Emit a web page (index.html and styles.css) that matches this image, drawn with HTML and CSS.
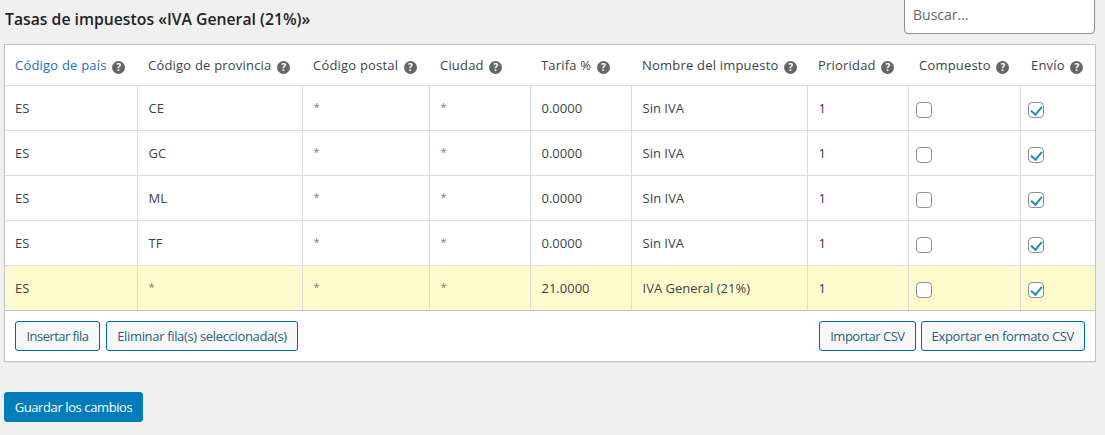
FILE: index.html
```html
<!DOCTYPE html>
<html lang="es">
<head>
<meta charset="utf-8">
<title>Tasas de impuestos</title>
<link rel="stylesheet" href="styles.css">
</head>
<body>
<div class="top">
  <h2 class="title">Tasas de impuestos «IVA General (21%)»</h2>
  <input class="search" type="text" placeholder="Buscar...">
</div>
<div class="panel">
<table class="rates">
  <colgroup>
    <col class="c1"><col class="c2"><col class="c3"><col class="c4"><col class="c5"><col class="c6"><col class="c7"><col class="c8"><col class="c9">
  </colgroup>
  <thead>
    <tr>
      <th class="link">Código de país <i class="help">?</i></th>
      <th>Código de provincia <i class="help">?</i></th>
      <th>Código postal <i class="help">?</i></th>
      <th>Ciudad <i class="help">?</i></th>
      <th>Tarifa % <i class="help">?</i></th>
      <th>Nombre del impuesto <i class="help">?</i></th>
      <th>Prioridad <i class="help">?</i></th>
      <th>Compuesto <i class="help">?</i></th>
      <th>Envío <i class="help">?</i></th>
    </tr>
  </thead>
  <tbody>
    <tr><td>ES</td><td>CE</td><td class="star">*</td><td class="star">*</td><td>0.0000</td><td>Sin IVA</td><td class="num">1</td><td class="chk"><input type="checkbox"></td><td class="chk"><input type="checkbox" checked></td></tr>
    <tr><td>ES</td><td>GC</td><td class="star">*</td><td class="star">*</td><td>0.0000</td><td>Sin IVA</td><td class="num">1</td><td class="chk"><input type="checkbox"></td><td class="chk"><input type="checkbox" checked></td></tr>
    <tr><td>ES</td><td>ML</td><td class="star">*</td><td class="star">*</td><td>0.0000</td><td>SIn IVA</td><td class="num">1</td><td class="chk"><input type="checkbox"></td><td class="chk"><input type="checkbox" checked></td></tr>
    <tr><td>ES</td><td>TF</td><td class="star">*</td><td class="star">*</td><td>0.0000</td><td>Sin IVA</td><td class="num">1</td><td class="chk"><input type="checkbox"></td><td class="chk"><input type="checkbox" checked></td></tr>
    <tr class="active"><td>ES</td><td class="star">*</td><td class="star">*</td><td class="star">*</td><td>21.0000</td><td>IVA General (21%)</td><td class="num">1</td><td class="chk"><input type="checkbox"></td><td class="chk"><input type="checkbox" checked></td></tr>
  </tbody>
</table>
<div class="actions">
  <div class="group left">
    <button class="btn insert" type="button">Insertar fila</button>
    <button class="btn remove" type="button">Eliminar fila(s) seleccionada(s)</button>
  </div>
  <div class="group">
    <button class="btn import" type="button">Importar CSV</button>
    <button class="btn" type="button">Exportar en formato CSV</button>
  </div>
</div>
</div>
<button class="save" type="button">Guardar los cambios</button>
</body>
</html>
```
FILE: styles.css
```css
* { box-sizing: border-box; }
html, body { margin: 0; height: 435px; overflow: hidden; }
body {
  background: #f0f0f1;
  color: #3c434a;
  font-family: "Open Sans", "Noto Sans", sans-serif;
  font-size: 13px;
  padding: 0 9px 0 4px;
}
.top {
  display: flex;
  justify-content: space-between;
  align-items: flex-end;
  height: 44px;
  padding-bottom: 10px;
}
.title {
  margin: 0 0 0 1px;
  font-size: 15.75px;
  font-weight: 600;
  line-height: 20px;
  color: #1d2327;
  position: relative;
  top: -5px;
}
.search {
  display: block;
  width: 191px;
  height: 40px;
  margin-right: 1px;
  margin-top: -7px;
  padding: 0 8px;
  border: 1px solid #8c8f94;
  border-radius: 4px;
  background: #fff;
  font: 14px "Open Sans", sans-serif;
}
.search::placeholder { color: #646970; opacity: 1; }
.panel {
  width: 1092px;
  background: #fff;
  border: 1px solid #c3c4c7;
  box-shadow: 0 1px 1px rgba(0,0,0,.04);
}
.rates {
  width: 1090px;
  table-layout: fixed;
  border-collapse: collapse;
}
.c1 { width: 132px; }
.c2 { width: 165px; }
.c3 { width: 127px; }
.c4 { width: 101px; }
.c5 { width: 101px; }
.c6 { width: 176px; }
.c7 { width: 101px; }
.c8 { width: 112px; }
.c9 { width: 75px; }
th {
  height: 40px;
  padding: 1px 0 0 11px;
  text-align: left;
  font-weight: 400;
  color: #3c434a;
  white-space: nowrap;
  letter-spacing: .2px;
  border-bottom: 1px solid #dcdcde;
  vertical-align: middle;
}
th:first-child, td:first-child { padding-left: 10px; }
th.link { color: #2271b1; }
td {
  height: 45px;
  padding: 0 0 0 11px;
  color: #3c434a;
  border-left: 1px solid #dcdcde;
  border-bottom: 1px solid #dcdcde;
  vertical-align: middle;
  background: #fff;
}
td:first-child { border-left: 0; }
td.star { color: #787c82; font-size: 11px; padding-bottom: 3px; }
td.num { color: #3f1f6b; }
td.chk { padding: 4px 0 0 7px; }
tbody tr:last-child td { border-bottom-color: #c3c4c7; }
.active td { background: #fffbcc; }
.help {
  display: inline-block;
  width: 13px;
  height: 13px;
  margin-left: 2px;
  border-radius: 50%;
  background: #666;
  color: #fff;
  font: 700 10px/13px "Open Sans", sans-serif;
  letter-spacing: 0;
  text-align: center;
  vertical-align: -1px;
}
input[type=checkbox] {
  appearance: none;
  display: block;
  position: relative;
  width: 16px;
  height: 16px;
  margin: 0;
  border: 1px solid #8c8f94;
  border-radius: 4px;
  background: #fff;
}
input[type=checkbox]:checked::after {
  content: "";
  position: absolute;
  left: 4.5px;
  top: 1px;
  width: 5px;
  height: 9px;
  border: solid #1e8cbe;
  border-width: 0 2.6px 2.6px 0;
  transform: rotate(40deg);
}
.actions {
  display: flex;
  justify-content: space-between;
  padding: 10px;
}
.group { display: flex; gap: 5px; }
.group.left { gap: 6px; }
.btn {
  height: 30px;
  padding: 0 10px;
  border: 1px solid #006799;
  border-radius: 3px;
  background: #f6f7f7;
  color: #2c5f7c;
  font: 13px "Open Sans", sans-serif;
  letter-spacing: -.33px;
  white-space: nowrap;
}
.insert { width: 85px; padding: 0; letter-spacing: -.55px; }
.remove { width: 192px; padding: 0; }
.import { letter-spacing: -.5px; }
.save {
  display: block;
  height: 30px;
  width: 139px;
  margin-top: 30px;
  padding: 0;
  border: 1px solid #007cba;
  border-radius: 3px;
  background: #007cba;
  color: #fff;
  font: 13px "Open Sans", sans-serif;
  letter-spacing: -.4px;
}
```
